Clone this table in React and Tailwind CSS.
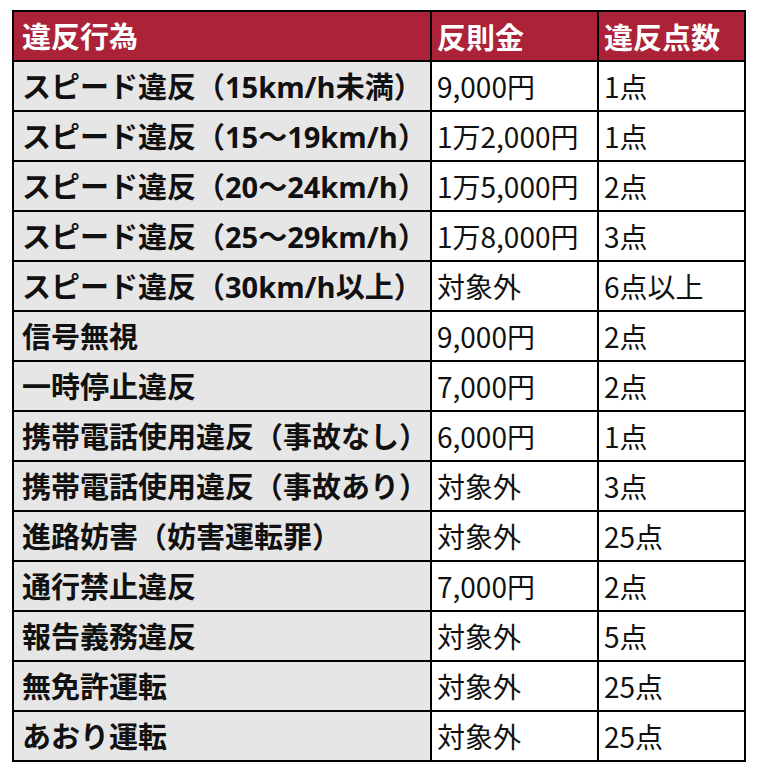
import React from "react";

const rows = [
  ["スピード違反（15km/h未満）", "9,000円", "1点"],
  ["スピード違反（15～19km/h）", "1万2,000円", "1点"],
  ["スピード違反（20～24km/h）", "1万5,000円", "2点"],
  ["スピード違反（25～29km/h）", "1万8,000円", "3点"],
  ["スピード違反（30km/h以上）", "対象外", "6点以上"],
  ["信号無視", "9,000円", "2点"],
  ["一時停止違反", "7,000円", "2点"],
  ["携帯電話使用違反（事故なし）", "6,000円", "1点"],
  ["携帯電話使用違反（事故あり）", "対象外", "3点"],
  ["進路妨害（妨害運転罪）", "対象外", "25点"],
  ["通行禁止違反", "7,000円", "2点"],
  ["報告義務違反", "対象外", "5点"],
  ["無免許運転", "対象外", "25点"],
  ["あおり運転", "対象外", "25点"],
];

const boldFont = { fontFamily: '"Open Sans", "Noto Sans CJK JP", sans-serif' };

const App = () => {
  return (
    <div
      className="bg-white w-[760px] h-[780px] pt-[10px] pl-[12px]"
      style={{ fontFamily: '"Noto Sans CJK JP", "Noto Sans", sans-serif' }}
    >
      <table className="table-fixed w-[732px] border-collapse border-2 border-black text-[28px] leading-none text-[#111]">
        <colgroup>
          <col className="w-[418px]" />
          <col className="w-[167px]" />
          <col className="w-[147px]" />
        </colgroup>
        <thead>
          <tr className="h-[50px] bg-[#ab2239] text-white text-[29px]">
            <th className="border-2 border-black pl-[8px] pr-0 text-left font-bold" style={boldFont}>違反行為</th>
            <th className="border-2 border-black px-[5px] text-left font-bold">反則金</th>
            <th className="border-2 border-black px-[5px] text-left font-bold">違反点数</th>
          </tr>
        </thead>
        <tbody>
          {rows.map((row) => (
            <tr key={row[0]} className="h-[50px]">
              <td
                className="border-2 border-black bg-[#e6e6e6] pl-[8px] pr-0 text-[29px] font-bold whitespace-nowrap"
                style={boldFont}
              >
                {row[0]}
              </td>
              <td className="border-2 border-black bg-white px-[5px] whitespace-nowrap">{row[1]}</td>
              <td className="border-2 border-black bg-white px-[5px] whitespace-nowrap">{row[2]}</td>
            </tr>
          ))}
        </tbody>
      </table>
    </div>
  );
};

export default App;
